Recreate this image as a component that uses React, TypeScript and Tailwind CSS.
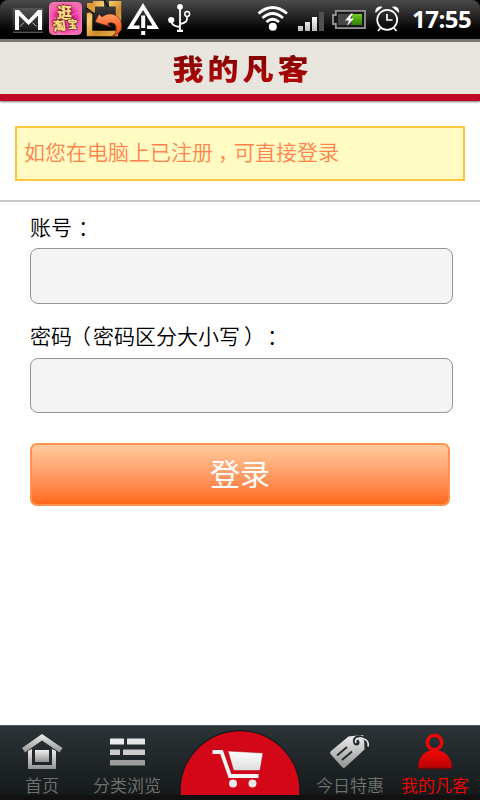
import { useState } from "react";
import clsx from "clsx";

type NavItem = {
	id: string;
	label: string;
	width: string;
	Icon: React.FC;
};

// Full-width punctuation sits in the middle of its cell
const Mark: React.FC<{ children: string; className: string }> = ({
	children,
	className,
}) => (
	<span className={clsx("inline-block w-[21px] whitespace-nowrap", className)}>
		{children}
	</span>
);

const StatusIcons: React.FC = () => (
	<svg width="200" height="38" viewBox="0 0 200 38" className="shrink-0">
		<defs>
			<linearGradient id="mail" x1="0" y1="0" x2="0" y2="1">
				<stop offset="0" stopColor="#555" />
				<stop offset="1" stopColor="#191919" />
			</linearGradient>
			<radialGradient id="pink">
				<stop offset="0" stopColor="#c3087f" />
				<stop offset="0.65" stopColor="#e92c9c" />
				<stop offset="1" stopColor="#f46cae" />
			</radialGradient>
			<linearGradient id="gold" gradientUnits="userSpaceOnUse" x1="87" y1="2" x2="121" y2="36">
				<stop offset="0" stopColor="#d98b2c" />
				<stop offset="0.3" stopColor="#f7cf72" />
				<stop offset="0.6" stopColor="#cf8a2c" />
				<stop offset="1" stopColor="#efbd5b" />
			</linearGradient>
			<linearGradient id="arrow" x1="0" y1="0" x2="0" y2="1">
				<stop offset="0" stopColor="#ff9c62" />
				<stop offset="0.5" stopColor="#ff682d" />
				<stop offset="1" stopColor="#e84b0c" />
			</linearGradient>
		</defs>

		<rect x="12.5" y="8" width="31" height="22.5" fill="url(#mail)" />
		<path d="M13 32.2h30" stroke="#777" strokeWidth="1" />
		<path d="M15 30V10h4l9.500 10 9.500-10h4v20h-4V15.500l-9.500 9.500-9.500-9.500V30z" fill="#fff" />
		<path d="M20 26.500l4-4M36.500 26.500l-4-4" stroke="#bbb" strokeWidth="1" />

		<rect x="49.5" y="2.5" width="32" height="32" rx="4" fill="url(#pink)" stroke="#f27bb7" />
		<path d="M65 18L52 7M65 18L51 18M65 18L54 33M65 18L71 33M65 18L80 27M65 18L80 12M65 18L73 4M65 18L61 3" stroke="#ff64bb" strokeWidth="1.5" opacity="0.7" />
		<g fill="#ffe08a" stroke="#642008" strokeWidth="1.2" paintOrder="stroke" fontWeight="900" fontFamily="Noto Sans CJK SC, sans-serif">
			<text x="57" y="17.5" fontSize="15">逛</text>
			<text x="53.5" y="31.5" fontSize="13" transform="rotate(-9 54 31)">淘</text>
			<text x="67.5" y="27.5" fontSize="10">宝</text>
		</g>

		<g fill="none" stroke="url(#gold)" strokeWidth="5.5">
			<path d="M93 3.800h11M109 3.800h9.500v27" />
			<path d="M89.500 13v20.500H118" />
		</g>
		<path d="M87 3l8 0v9l-4 3-4-6z" fill="#e09a38" />
		<path d="M86 8l8 6M104 0l4.500 7" stroke="#151515" strokeWidth="1.8" />
		<path d="M95 22l4-8 3 3c7-6 18-3 19.500 7 1 7-4 12-11 13 6-3 8-10 4-13-3-2-5-1-7 0l4 3z" fill="url(#arrow)" stroke="#4b2012" strokeWidth="0.6" />

		<path fillRule="evenodd" d="M143 3l16 26h-32zM143 10l-9.500 15.500h19z" fill="#fff" />
		<path d="M139.500 16h7.500v16h-7.500z" fill="#111" />
		<path d="M141.200 15.500h4v12.500h-4zM141.200 31h4v4h-4z" fill="#fff" />

		<g stroke="#fff" fill="none" strokeWidth="1.8">
			<path d="M180 7v24M171.500 21q0 5 8.500 6M187 17q1 6-7 7" />
			<circle cx="187.200" cy="14" r="2.400" strokeWidth="1.5" />
		</g>
		<circle cx="180" cy="6.8" r="2.900" fill="#fff" />
		<circle cx="171.200" cy="20" r="3.100" fill="#fff" />
		<path d="M177 29.700h6v2.300h-6z" fill="#fff" />
	</svg>
);

const DeviceIcons: React.FC = () => (
	<svg width="152" height="38" viewBox="252 0 152 38" className="shrink-0">
		<defs>
			<linearGradient id="charge" x1="0" y1="0" x2="0" y2="1">
				<stop offset="0" stopColor="#78ca28" />
				<stop offset="0.5" stopColor="#4ca40b" />
				<stop offset="1" stopColor="#367e05" />
			</linearGradient>
			<linearGradient id="bar" x1="0" y1="0" x2="0" y2="1">
				<stop offset="0" stopColor="#fff" />
				<stop offset="1" stopColor="#bbb" />
			</linearGradient>
		</defs>
		<g fill="none" stroke="#fff" strokeWidth="2.7">
			<path d="M258.500 13.500q14-12 28.500 0" />
			<path d="M262.500 18q10-9 20.500 0" />
			<path d="M266.500 22q6-5.500 12.500 0" />
		</g>
		<circle cx="272.800" cy="26.800" r="4" fill="#fff" />

		<path d="M298 26h5v5h-5zM305 22h5v9h-5zM312 17h5v14h-5z" fill="url(#bar)" />
		<path d="M319 12h5v19h-5z" fill="#515151" />

		<path d="M335.800 10.800H365v17.400h-29.200V24H333v-9h2.800z" fill="#191919" stroke="#949494" strokeWidth="1.8" />
		<path d="M338 14h14v11h-14z" fill="#474747" />
		<path d="M352 14h10v11h-10z" fill="url(#charge)" />
		<path d="M351 13.500l-6 7h4l-2 5.500 7-7.500h-4l3-5z" fill="#fff" />

		<g fill="none" stroke="#fff" strokeWidth="1.7">
			<circle cx="387.200" cy="19.800" r="10" />
			<path d="M387 14v6h5.500M380.500 28l-2.500 3M394 28l2.500 3" />
		</g>
		<path d="M375.500 13c-1-5 3-7.500 7-6zM399 13c1-5-3-7.500-7-6z" fill="#fff" />
	</svg>
);

const HomeIcon: React.FC = () => (
	<svg width="44" height="38" viewBox="20 732 44 38">
		<defs>
			<linearGradient id="silver" x1="0" y1="0" x2="0" y2="1">
				<stop offset="0" stopColor="#efefef" />
				<stop offset="1" stopColor="#929292" />
			</linearGradient>
		</defs>
		<path d="M42 734l20.500 14-3 4.500L42 740.500l-17 12-3-4.500z" fill="url(#silver)" />
		<path d="M28 751l4-2v16h20v-16l4 2v18H28z" fill="url(#silver)" />
		<path d="M35 750h14v12H35z" fill="url(#silver)" />
	</svg>
);

const CategoryIcon: React.FC = () => (
	<svg width="36" height="38" viewBox="109 732 36 38" fill="#ccc">
		<rect x="110" y="738.500" width="14" height="6" rx="0.6" fill="#ededed" />
		<rect x="127" y="738.500" width="18" height="6" rx="0.6" fill="#e4e4e4" />
		<rect x="110" y="749.500" width="10" height="5.500" rx="0.6" />
		<rect x="123" y="749.500" width="22" height="5.500" rx="0.6" />
		<rect x="110" y="760" width="35" height="5.500" rx="0.6" fill="#9c9c9c" />
	</svg>
);

const CartButton: React.FC = () => (
	<svg width="140" height="69" viewBox="170 726 140 69" className="block shrink-0">
		<defs>
			<linearGradient id="cart" x1="0" y1="0" x2="0" y2="1">
				<stop offset="0" stopColor="#fff" />
				<stop offset="1" stopColor="#ddd" />
			</linearGradient>
		</defs>
		<circle cx="240" cy="790.500" r="60.500" fill="#171a1b" />
		<circle cx="240" cy="790.500" r="59.300" fill="#d30718" />
		<path d="M213 751.500h8.500l9 24.500H258" fill="none" stroke="#7c0610" strokeWidth="4" opacity="0.55" />
		<path d="M212.500 752h9l8.500 24h28.500" fill="none" stroke="#f3f3f3" strokeWidth="3.800" />
		<path d="M228 751l35 2-3 17.500h-26.500z" fill="url(#cart)" stroke="#a4000d" strokeWidth="0.500" />
		<circle cx="233" cy="783.500" r="4" fill="#e8e8e8" />
		<circle cx="252.500" cy="783.500" r="4" fill="#e8e8e8" />
	</svg>
);

const TagIcon: React.FC = () => (
	<svg width="44" height="38" viewBox="329 732 44 38">
		<path d="M331.500 754q-1-1.500.5-3l17.500-14.500 13.500-1.500q1.800 0 2 1.500l.5 13-19.500 18q-1.500 1-3-.5z" fill="url(#silver)" />
		<path d="M338 755.500l10-8.500M343 760l10-8.500" stroke="#252c2e" strokeWidth="2" />
		<circle cx="357.500" cy="742.500" r="3" fill="#23292b" />
		<path d="M356.500 743.500c-4-5 3-8 7-6 4 1 6 4 5.500 8" fill="none" stroke="#23292b" strokeWidth="3" />
		<path d="M357 743c-2-5 4-6 7-4.500 4 1 6 4 5 8" fill="none" stroke="#ddd" strokeWidth="1.800" />
	</svg>
);

const AccountIcon: React.FC = () => (
	<svg width="38" height="38" viewBox="417 732 38 38">
		<defs>
			<linearGradient id="person" x1="0" y1="0" x2="0" y2="1">
				<stop offset="0" stopColor="#f30808" />
				<stop offset="1" stopColor="#b90404" />
			</linearGradient>
		</defs>
		<circle cx="435.500" cy="742.500" r="7.200" fill="none" stroke="#e80808" strokeWidth="3.600" />
		<path d="M419 768c0-10 6-17 13-17.500h7c8 1 14 8 14 17.500z" fill="url(#person)" />
		<path d="M419 768.500h34" stroke="#690909" strokeWidth="1.500" />
	</svg>
);

const navItems: NavItem[] = [
	{ id: "home", label: "首页", width: "w-[84px]", Icon: HomeIcon },
	{ id: "category", label: "分类浏览", width: "w-[86px]", Icon: CategoryIcon },
	{ id: "cart", label: "", width: "w-[140px]", Icon: CartButton },
	{ id: "deals", label: "今日特惠", width: "w-20", Icon: TagIcon },
	{ id: "account", label: "我的凡客", width: "w-[90px]", Icon: AccountIcon },
];

const App: React.FC = () => {
	const [activeTab, setActiveTab] = useState("account");

	return (
		<div
			lang="zh-CN"
			className="flex h-[800px] w-[480px] flex-col overflow-hidden bg-white font-['Noto_Sans_CJK_SC',sans-serif] font-[350]"
		>
			<div className="bg-black">
				<div className="flex h-[39px] items-start justify-between rounded-t-lg bg-linear-to-b from-[#4b4b4b] via-[#222] via-45% to-black">
					<StatusIcons />
					<div className="flex items-center">
						<DeviceIcons />
						<span className="w-[76px] pl-2 font-['Open_Sans',sans-serif] text-[24px] leading-[38px] font-bold tracking-[-0.5px] text-white">
							17:55
						</span>
					</div>
				</div>
			</div>

			<header className="flex h-[62px] items-center justify-center border-t-[3px] border-b-[7px] border-t-[#77776f] border-b-[#bf0624] bg-[#e8e5de] shadow-[0_1px_2px_#777]">
				<h1 className="scale-y-90 bg-linear-to-b from-[#730000] to-[#c00909] bg-clip-text pl-[5px] text-[31px] leading-[50px] font-black tracking-[4px] text-transparent">
					我的凡客
				</h1>
			</header>

			<main className="flex-1">
				<section className="h-[101px] border-b-2 border-[#c8c8c8] px-[15px] pt-[25px]">
					<p className="h-[55px] border-2 border-[#fbc63b] bg-[#fffbc3] pl-[7px] text-[21px] leading-[47px] text-[#ff834b]">
						如您在电脑上已注册<Mark className="pl-[5px]">，</Mark>可直接登录
					</p>
				</section>

				<form className="flex flex-col pl-[30px] text-[21px] text-black" onSubmit={(e) => e.preventDefault()}>
					<label htmlFor="account" className="h-[46px] leading-[49px]">
						账号<Mark className="pl-[6px]">：</Mark>
					</label>
					<input
						id="account"
						className="h-14 w-[423px] rounded-lg border border-[#949494] bg-[#f5f4f5] px-3 outline-none"
					/>
					<label htmlFor="password" className="h-[54px] leading-[63px]">
						密码<Mark className="-indent-[2px]">（</Mark>密码区分大小写
						<Mark className="pl-[4px]">）</Mark>
						<Mark className="pl-[6px]">：</Mark>
					</label>
					<input
						id="password"
						type="password"
						className="h-[55px] w-[423px] rounded-lg border border-[#949494] bg-[#f5f4f5] px-3 outline-none"
					/>
					<button className="mt-[30px] h-[63px] w-[420px] rounded-[7px] border-2 border-[#fb934f] bg-linear-to-b from-[#ffca9c] to-[#fd6814] pb-[4px] text-[30px] leading-[55px] font-normal text-white">
						登录
					</button>
				</form>
			</main>

			<nav className="flex h-[75px] border-t border-b-[5px] border-t-[#535a5d] border-b-[#111] bg-linear-to-b from-[#2c3437] to-[#15191b]">
				{navItems.map(({ id, label, width, Icon }) => (
					<button
						key={id}
						aria-label={label || "购物车"}
						onClick={() => setActiveTab(id)}
						className={clsx(
							"flex h-[69px] shrink-0 flex-col items-center",
							width,
							id !== "cart" && "pt-[6px]",
							activeTab === id ? "text-[#ff0000]" : "text-[#70746f]"
						)}
					>
						<Icon />
						{label && (
							<span className="h-[25px] text-[17px] leading-[30px] whitespace-nowrap">
								{label}
							</span>
						)}
					</button>
				))}
			</nav>
		</div>
	);
};

export default App;
